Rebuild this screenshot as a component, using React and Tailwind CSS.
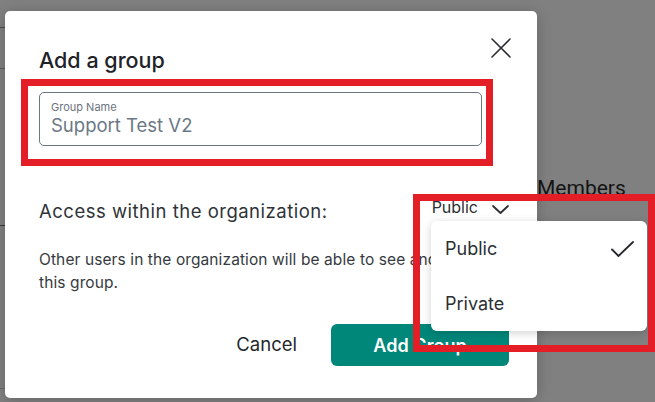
import React, { useState } from "react";

const font = { fontFamily: "Inter, 'Noto Sans', sans-serif" };

function CloseIcon() {
  return (
    <svg width="20" height="20" viewBox="0 0 20 20" fill="none">
      <path d="M1 1 L19 19 M19 1 L1 19" stroke="#2b2f33" strokeWidth="1.6" strokeLinecap="round" />
    </svg>
  );
}

function Chevron() {
  return (
    <svg width="17" height="9" viewBox="0 0 17 9" fill="none">
      <path d="M1 1 L8.5 8 L16 1" stroke="#2b2f33" strokeWidth="1.8" strokeLinecap="round" strokeLinejoin="round" />
    </svg>
  );
}

function Check() {
  return (
    <svg width="23" height="16" viewBox="0 0 23 16" fill="none">
      <path d="M1 8.5 L7.5 15 L22 1" stroke="#24282c" strokeWidth="1.8" strokeLinecap="round" strokeLinejoin="round" />
    </svg>
  );
}

export default function App() {
  const [access, setAccess] = useState("Public");
  const [name, setName] = useState("Support Test V2");

  return (
    <div className="relative w-[655px] h-[402px] overflow-hidden bg-[#808080]" style={font}>
      {/* page behind the backdrop: dividers and a column header */}
      <div className="absolute left-0 top-[27px] w-[5px] flex flex-col">
        <div className="h-px bg-[#4a4a4a]" />
        <div className="mt-[40px] h-px bg-[#5e5e5e]" />
        <div className="mt-[156px] h-px bg-[#3a3a3a]" />
        <div className="mt-[162px] h-px bg-[#6a6a6a]" />
      </div>
      <div
        className="absolute left-[537px] top-[174px] text-[21px] leading-[28px] text-[#141414]"
        style={{ fontFamily: "Roboto, sans-serif" }}
      >
        Members
      </div>

      {/* dialog */}
      <div className="absolute left-[5px] top-[11px] w-[532px] h-[387px] bg-white rounded-[5px] shadow-[0_2px_14px_rgba(0,0,0,0.22)] pl-[34px] pr-[28px] pt-[35px]">
        <button className="absolute right-[26px] top-[27px]">
          <CloseIcon />
        </button>

        <h2 className="text-[21.5px] leading-[28px] font-medium text-[#1f2328]">Add a group</h2>

        <div className="mt-[18px] w-[443px] h-[54px] border border-[#6b7683] rounded-[5px] px-[11px] pt-[7px]">
          <label className="block text-[11px] leading-[14px] text-[#6b7280]">Group Name</label>
          <input
            value={name}
            onChange={(e) => setName(e.target.value)}
            className="block w-full text-[18.5px] leading-[22px] text-[#6b7886] outline-none bg-transparent"
          />
        </div>

        <div className="mt-[53px] flex items-start justify-between">
          <span className="text-[18.5px] leading-[24px] tracking-[0.5px] text-[#2f3338]">
            Access within the organization:
          </span>
          <button className="-mt-[2px] flex items-center gap-[14px] text-[16px] leading-[20px] text-[#2b2f33]">
            {access}
            <span className="mt-[4px]">
              <Chevron />
            </span>
          </button>
        </div>

        <p className="mt-[25px] max-w-[450px] text-[15.5px] leading-[23px] tracking-[0.1px] text-[#363a40]">
          Other users in the organization will be able to see and join this group.
        </p>

        <div className="mt-[30px] flex items-center justify-end gap-[34px]">
          <button className="text-[18.5px] text-[#23272b]">Cancel</button>
          <button className="w-[178px] h-[42px] rounded-[6px] bg-[#00877a] text-white text-[18px] font-semibold">
            Add Group
          </button>
        </div>
      </div>

      {/* access menu */}
      <div className="absolute left-[431px] top-[221px] w-[216px] rounded-[6px] bg-white shadow-[0_2px_10px_rgba(0,0,0,0.18)]">
        {["Public", "Private"].map((opt) => (
          <div
            key={opt}
            onClick={() => setAccess(opt)}
            className="h-[55px] flex items-center justify-between pl-[14px] pr-[13px] text-[18px] text-[#2b2f33] cursor-pointer"
          >
            <span>{opt}</span>
            {access === opt && <Check />}
          </div>
        ))}
      </div>

      {/* highlight frames */}
      <div className="absolute left-[21px] top-[79px] w-[472px] h-[87px] border-[7px] border-[#e41e26]" />
      <div className="absolute left-[413px] top-[194px] w-[242px] h-[158px] border-[7px] border-[#e41e26]" />
    </div>
  );
}
